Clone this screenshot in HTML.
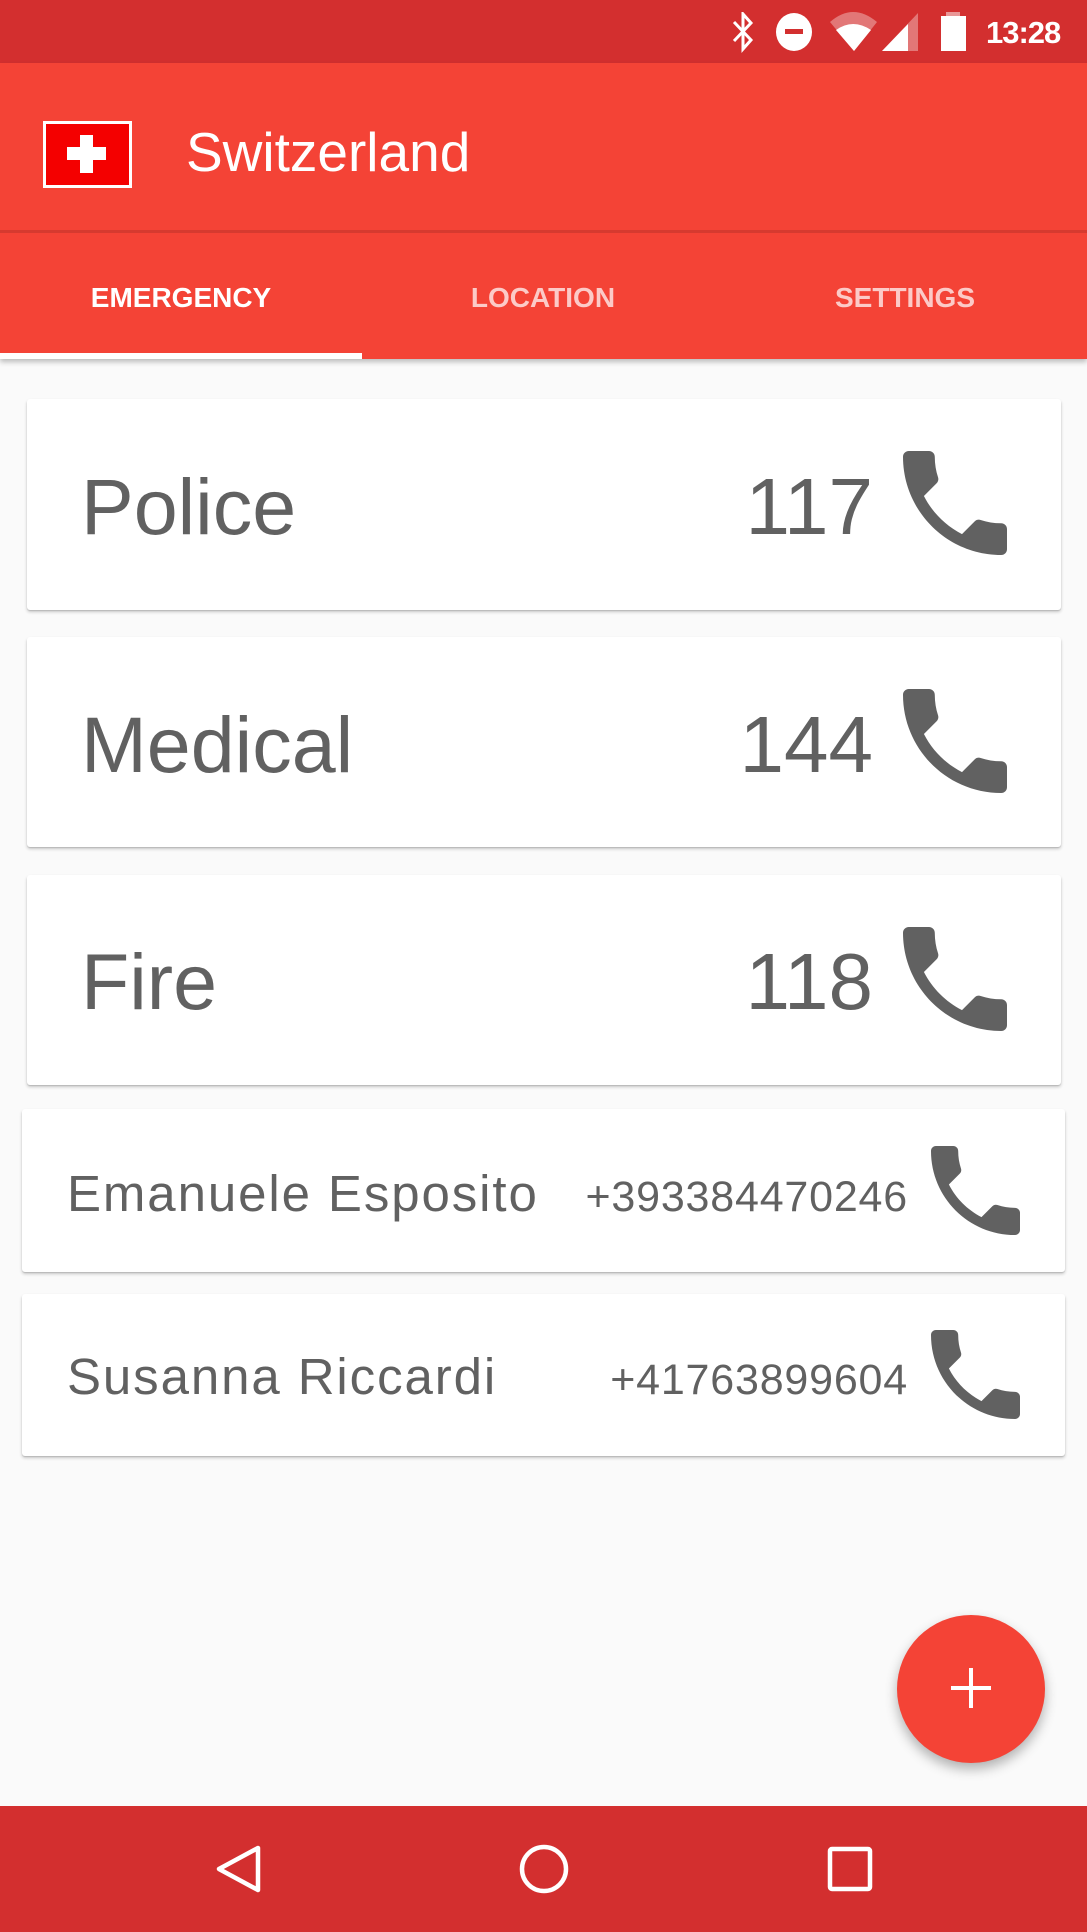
<!DOCTYPE html>
<html><head><meta charset="utf-8"><style>
*{margin:0;padding:0;box-sizing:border-box}
body{width:1087px;height:1932px;background:#FAFAFA;position:relative;overflow:hidden;font-family:"Liberation Sans",sans-serif}
.a{position:absolute}
.t{position:absolute;white-space:nowrap}
.card{position:absolute;background:#fff;border-radius:3px;box-shadow:0 1px 1px rgba(0,0,0,.12),0 2px 3px rgba(0,0,0,.2)}
.g{color:#616161}
</style></head><body>
<div class="a" style="left:0;top:0;width:1087px;height:63px;background:#D32F2F"></div>
<div class="a" style="left:0;top:63px;width:1087px;height:296px;background:#F44336;box-shadow:0 3px 5px rgba(0,0,0,.25)"></div>
<div class="a" style="left:0;top:230px;width:1087px;height:3px;background:rgba(0,0,0,.12)"></div>
<svg class="a" style="left:728px;top:12px" width="340" height="42" viewBox="728 12 340 42">
<path d="M734 22 L751 40 L743 49 L743 14 L751 23 L734 41" fill="none" stroke="#fff" stroke-width="3"/>
<ellipse cx="794" cy="32" rx="18" ry="19" fill="#fff"/><rect x="785" y="29" width="18" height="5" fill="#D32F2F"/>
<path d="M830 22 Q853 2 877 22 L854 51 Z" fill="rgba(255,255,255,.35)"/>
<path d="M836 30 Q853 18 871 30 L854 51 Z" fill="#fff"/>
<path d="M882 51 L918 13 L918 51 Z" fill="rgba(255,255,255,.35)"/>
<path d="M882 51 L908 24 L908 51 Z" fill="#fff"/>
<rect x="946" y="12" width="14" height="5" fill="rgba(255,255,255,.5)"/>
<rect x="941" y="16" width="25" height="35" fill="#fff"/>
</svg>
<div class="t" style="left:986px;top:17px;font-size:31px;line-height:31px;color:#fff;font-weight:bold;letter-spacing:-1px">13:28</div>
<div class="a" style="left:43px;top:121px;width:89px;height:67px;border:3px solid #fff;background:#F40000"></div>
<div class="a" style="left:67px;top:147px;width:39px;height:13px;background:#fff"></div>
<div class="a" style="left:80px;top:135px;width:13px;height:38px;background:#fff"></div>
<div class="t" style="left:186px;top:125px;font-size:55px;line-height:55px;color:#fff">Switzerland</div>
<div class="t" style="left:0;width:362px;text-align:center;top:282px;font-size:28px;line-height:32px;color:#fff;font-weight:bold">EMERGENCY</div>
<div class="t" style="left:362px;width:362px;text-align:center;top:282px;font-size:28px;line-height:32px;color:rgba(255,255,255,.72);font-weight:bold">LOCATION</div>
<div class="t" style="left:724px;width:362px;text-align:center;top:282px;font-size:28px;line-height:32px;color:rgba(255,255,255,.72);font-weight:bold">SETTINGS</div>
<div class="a" style="left:0;top:353px;width:362px;height:6px;background:#fff"></div>
<div class="card" style="left:27px;top:399px;width:1034px;height:211px"></div>
<div class="card" style="left:27px;top:637px;width:1034px;height:210px"></div>
<div class="card" style="left:27px;top:875px;width:1034px;height:210px"></div>
<div class="card" style="left:22px;top:1109px;width:1043px;height:163px"></div>
<div class="card" style="left:22px;top:1294px;width:1043px;height:162px"></div>
<div class="t g" style="left:81px;top:466px;font-size:79px;line-height:82px">Police</div>
<div class="t g" style="left:81px;top:704px;font-size:79px;line-height:82px">Medical</div>
<div class="t g" style="left:81px;top:941px;font-size:79px;line-height:82px">Fire</div>
<div class="t g" style="right:214px;top:466px;font-size:80px;line-height:82px">117</div>
<div class="t g" style="right:214px;top:704px;font-size:80px;line-height:82px">144</div>
<div class="t g" style="right:214px;top:941px;font-size:80px;line-height:82px">118</div>
<div class="t g" style="left:67px;top:1168px;font-size:51px;line-height:52px;letter-spacing:1.9px">Emanuele Esposito</div>
<div class="t g" style="left:67px;top:1351px;font-size:51px;line-height:52px;letter-spacing:1.9px">Susanna Riccardi</div>
<div class="t g" style="right:179px;top:1175px;font-size:43px;line-height:44px;letter-spacing:0.8px">+393384470246</div>
<div class="t g" style="right:179px;top:1358px;font-size:43px;line-height:44px;letter-spacing:0.8px">+41763899604</div>
<svg width="0" height="0" style="position:absolute"><defs><path id="ph" d="M6.62 10.79c1.44 2.83 3.76 5.14 6.59 6.59l2.2-2.2c.27-.27.67-.36 1.02-.24 1.12.37 2.330.57 3.57.57.55 0 1 .45 1 1V20c0 .55-.45 1-1 1-9.39 0-17-7.610-17-17 0-.55.45-1 1-1h3.5c.55 0 1 .45 1 1 0 1.25.2 2.45.57 3.570.11.35.03.74-.25 1.02l-2.2 2.2z" fill="#616161"/></defs></svg>
<svg class="a" style="left:903px;top:451px" width="104" height="104" viewBox="3 3 18 18"><use href="#ph"/></svg>
<svg class="a" style="left:903px;top:689px" width="104" height="104" viewBox="3 3 18 18"><use href="#ph"/></svg>
<svg class="a" style="left:903px;top:927px" width="104" height="104" viewBox="3 3 18 18"><use href="#ph"/></svg>
<svg class="a" style="left:931px;top:1146px" width="89" height="89" viewBox="3 3 18 18"><use href="#ph"/></svg>
<svg class="a" style="left:931px;top:1330px" width="89" height="89" viewBox="3 3 18 18"><use href="#ph"/></svg>
<div class="a" style="left:897px;top:1615px;width:148px;height:148px;border-radius:50%;background:#F44336;box-shadow:0 6px 12px rgba(0,0,0,.3)"></div>
<div class="a" style="left:951px;top:1686px;width:40px;height:4px;background:#fff"></div>
<div class="a" style="left:969px;top:1668px;width:4px;height:40px;background:#fff"></div>
<div class="a" style="left:0;top:1806px;width:1087px;height:126px;background:#D32F2F"></div>
<svg class="a" style="left:0;top:1806px" width="1087" height="126">
<path d="M258 42 L258 84 L219 63 Z" fill="none" stroke="#fff" stroke-width="4.5" stroke-linejoin="round"/>
<circle cx="544" cy="63" r="22" fill="none" stroke="#fff" stroke-width="4.5"/>
<rect x="830" y="43" width="40" height="40" rx="2" fill="none" stroke="#fff" stroke-width="4.5"/>
</svg>
</body></html>
